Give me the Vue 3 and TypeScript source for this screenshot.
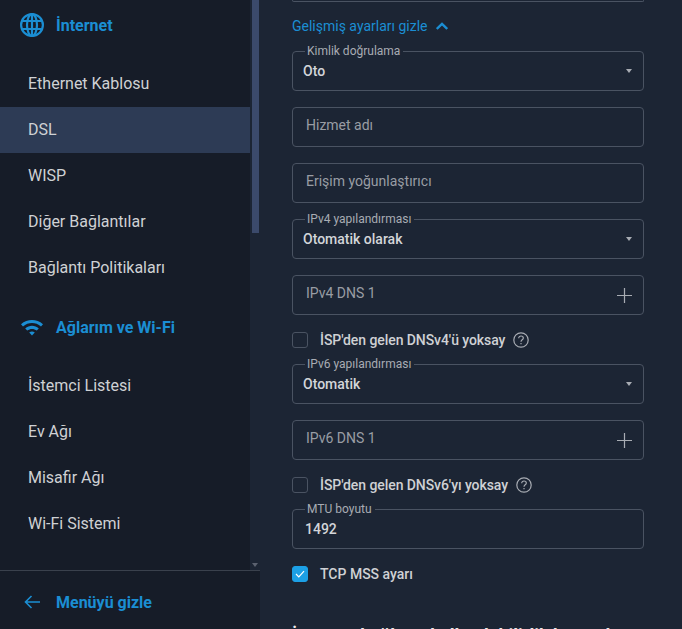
<script setup lang="ts">
interface Group {
  title: string
  icon: 'globe' | 'wifi'
  items: string[]
}

const groups: Group[] = [
  {
    title: 'İnternet',
    icon: 'globe',
    items: ['Ethernet Kablosu', 'DSL', 'WISP', 'Diğer Bağlantılar', 'Bağlantı Politikaları']
  },
  {
    title: 'Ağlarım ve Wi-Fi',
    icon: 'wifi',
    items: ['İstemci Listesi', 'Ev Ağı', 'Misafir Ağı', 'Wi-Fi Sistemi']
  }
]
</script>

<template>
  <div class="page">
    <aside class="sidebar">
      <div class="nav-wrap">
        <nav class="nav">
          <div v-for="group in groups" :key="group.title" class="group">
            <div class="group-title">
              <svg v-if="group.icon === 'globe'" class="group-icon" viewBox="0 0 24 24" fill="none" stroke="currentColor" stroke-width="2.200">
                <circle cx="12" cy="12" r="10.900" />
                <ellipse cx="12" cy="12" rx="5" ry="10.900" />
                <path d="M12 1v22M2.200 8h19.600M2.200 16h19.600" />
              </svg>
              <svg v-else class="group-icon" viewBox="0 0 24 24" fill="currentColor">
                <path d="M1 9.200C7.400 3.600 16.600 3.600 23 9.200l-2 2.200C15.700 6.900 8.300 6.900 3 11.400z" />
                <path d="M5.200 13.400c4-3.400 9.600-3.400 13.600 0l-2 2.200c-2.900-2.300-6.700-2.300-9.600 0z" />
                <path d="M9.200 17.500c1.700-1.200 3.900-1.200 5.600 0L12 20.500z" />
              </svg>
              <span>{{ group.title }}</span>
            </div>
            <a v-for="item in group.items" :key="item" class="nav-item" :class="{ active: item === 'DSL' }">{{ item }}</a>
          </div>
        </nav>
        <div class="scrollbar">
          <div class="scroll-thumb"></div>
          <div class="scroll-arrow"></div>
        </div>
      </div>
      <div class="sidebar-foot">
        <svg class="back-icon" viewBox="0 0 16 14" fill="none" stroke="currentColor" stroke-width="1.600">
          <path d="M16 7H1.500M7.500 1 1.500 7l6 6" />
        </svg>
        <span>Menüyü gizle</span>
      </div>
    </aside>

    <main class="main">
      <div class="cut-box"></div>

      <a class="toggle">
        Gelişmiş ayarları gizle
        <svg viewBox="0 0 12 8" width="12" height="8" fill="none" stroke="currentColor" stroke-width="2.400">
          <path d="M.8 7l5.200-5 5.200 5" />
        </svg>
      </a>

      <div class="form">
        <div class="field">
          <label class="float">Kimlik doğrulama</label>
          <span class="value">Oto</span>
          <i class="caret"></i>
        </div>

        <div class="field"><span class="placeholder">Hizmet adı</span></div>
        <div class="field"><span class="placeholder">Erişim yoğunlaştırıcı</span></div>

        <div class="field">
          <label class="float">IPv4 yapılandırması</label>
          <span class="value">Otomatik olarak</span>
          <i class="caret"></i>
        </div>

        <div class="field">
          <span class="placeholder">IPv4 DNS 1</span>
          <svg class="plus" viewBox="0 0 16 16" stroke="currentColor" stroke-width="1.300"><path d="M8 0v16M0 8h16" /></svg>
        </div>

        <div class="check-row long">
          <span class="check"></span>
          <span>İSP'den gelen DNSv4'ü yoksay</span>
          <svg class="help" viewBox="0 0 16 16" fill="none" stroke="currentColor" stroke-width="1.200">
            <circle cx="8" cy="8" r="7.200" />
            <path d="M5.700 6.200c0-1.300 1-2.200 2.300-2.200s2.300.9 2.300 2c0 1.800-2.300 1.800-2.300 3.700" />
            <path d="M8 10.900v1.400" />
          </svg>
        </div>

        <div class="field">
          <label class="float">IPv6 yapılandırması</label>
          <span class="value">Otomatik</span>
          <i class="caret"></i>
        </div>

        <div class="field">
          <span class="placeholder">IPv6 DNS 1</span>
          <svg class="plus" viewBox="0 0 16 16" stroke="currentColor" stroke-width="1.300"><path d="M8 0v16M0 8h16" /></svg>
        </div>

        <div class="check-row long">
          <span class="check"></span>
          <span>İSP'den gelen DNSv6'yı yoksay</span>
          <svg class="help" viewBox="0 0 16 16" fill="none" stroke="currentColor" stroke-width="1.200">
            <circle cx="8" cy="8" r="7.200" />
            <path d="M5.700 6.200c0-1.300 1-2.200 2.300-2.200s2.300.9 2.300 2c0 1.800-2.300 1.800-2.300 3.700" />
            <path d="M8 10.900v1.400" />
          </svg>
        </div>

        <div class="field">
          <label class="float">MTU boyutu</label>
          <span class="value number">1492</span>
        </div>

        <div class="check-row">
          <span class="check on">
            <svg viewBox="0 0 12 10" width="10" height="8" fill="none" stroke="#fff" stroke-width="1.500"><path d="M1 5l3.500 3.500L11 1.500" /></svg>
          </span>
          <span>TCP MSS ayarı</span>
        </div>
      </div>

      <h2 class="section-title">İnternet bağlantı kullanılabilirlik kontrolü</h2>
    </main>
  </div>
</template>

<style>
html,
body {
  margin: 0;
  background: #1c2534;
}
</style>

<style scoped>
.page {
  display: flex;
  width: 682px;
  height: 629px;
  overflow: hidden;
  font-family: Roboto, "Liberation Sans", sans-serif;
  background: #1c2534;
}

.sidebar {
  flex: 0 0 260px;
  display: flex;
  flex-direction: column;
  background: #161c28;
}

.nav-wrap {
  flex: 0 0 570px;
  display: flex;
  overflow: hidden;
  border-bottom: 1px solid #3a414d;
}

.nav {
  flex: 0 0 250px;
}

.group + .group {
  margin-top: 11px;
}

.group-title {
  display: flex;
  align-items: center;
  gap: 12px;
  height: 50px;
  margin-bottom: 11px;
  padding-left: 20px;
  color: #1b8ed3;
  font-size: 16px;
  font-weight: 700;
}

.group-icon {
  width: 24px;
  height: 24px;
}

.nav-item {
  display: block;
  height: 46px;
  padding-left: 28px;
  color: #cfd1d4;
  font-size: 16px;
  line-height: 46px;
}

.nav-item.active {
  background: #2d3b55;
}

.scrollbar {
  position: relative;
  flex: 0 0 10px;
  background: #1c2534;
}

.scroll-thumb {
  width: 7px;
  height: 233px;
  margin-left: 2px;
  background: #3b4a6b;
}

.scroll-arrow {
  position: absolute;
  left: 2px;
  bottom: 3px;
  border-left: 3px solid transparent;
  border-right: 3px solid transparent;
  border-top: 4px solid #5b6270;
}

.sidebar-foot {
  display: flex;
  flex: 0 0 62px;
  align-items: center;
  gap: 16px;
  padding-left: 24px;
  color: #1b8ed3;
  font-size: 16px;
  font-weight: 700;
}

.back-icon {
  width: 16px;
  height: 14px;
}

.main {
  flex: 1;
  min-width: 0;
  padding: 0 38px 0 32px;
}

.cut-box {
  height: 1px;
  border: 1px solid #4a5362;
  border-top: 0;
  border-radius: 0 0 4px 4px;
}

.toggle {
  display: flex;
  align-items: center;
  gap: 8px;
  height: 20px;
  margin-top: 14px;
  color: #1b8ed3;
  font-size: 14px;
}

.form {
  display: flex;
  flex-direction: column;
  gap: 16px;
  margin-top: 15px;
}

.field {
  position: relative;
  display: flex;
  align-items: center;
  justify-content: space-between;
  box-sizing: border-box;
  height: 40px;
  border: 1px solid #4a5362;
  border-radius: 4px;
  padding: 0 10px;
  font-size: 14px;
}

.float {
  position: absolute;
  left: 12px;
  top: -7px;
  padding: 0 3px 0 2px;
  background: #1c2534;
  color: #a8acb3;
  font-size: 12px;
  line-height: 13px;
}

.value {
  color: #d3d5d9;
  font-weight: 500;
}

.value.number {
  padding-left: 2px;
}

.placeholder {
  margin-top: -4px;
  padding-left: 3px;
  color: #999da4;
}

.caret {
  margin-right: 1px;
  border-left: 3px solid transparent;
  border-right: 3px solid transparent;
  border-top: 4px solid #a8acb3;
}

.plus {
  width: 15px;
  height: 15px;
  margin: 0 1px 0 0;
  color: #a8acb3;
}

.check-row {
  display: flex;
  align-items: center;
  gap: 12px;
  height: 17px;
  color: #cfd1d4;
  font-size: 14px;
  font-weight: 500;
}

.check-row.long {
  letter-spacing: -0.07px;
}

.check {
  display: flex;
  align-items: center;
  justify-content: center;
  box-sizing: border-box;
  width: 16px;
  height: 16px;
  border: 1px solid #4a5362;
  border-radius: 3px;
}

.check.on {
  background: #1ca0e6;
  border-color: #1ca0e6;
}

.help {
  width: 16px;
  height: 16px;
  margin-left: -4px;
  color: #a8acb3;
}

.section-title {
  margin: 43px 0 0;
  color: #e8e9eb;
  font-size: 18px;
  font-weight: 700;
  white-space: nowrap;
}
</style>
